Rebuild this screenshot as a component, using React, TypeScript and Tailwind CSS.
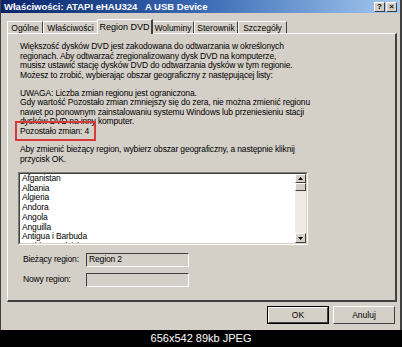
import React from "react";

const font = { fontFamily: '"Liberation Sans", Arial, sans-serif' };

function Tab({ label, selected, w }: { label: string; selected?: boolean; w: string }) {
  if (selected) {
    return (
      <div
        className={`relative z-10 -mx-[1px] h-[15px] ${w} border-l border-t border-white border-r-2 border-r-[#404040] bg-[#d4d0c8] flex items-center justify-center text-[9px] leading-none text-black`}
      >
        {label}
      </div>
    );
  }
  return (
    <div
      className={`mt-[2px] h-[13px] ${w} border-l border-t border-white border-r border-r-[#404040] bg-[#d4d0c8] flex items-center justify-center text-[8.5px] leading-none text-black`}
    >
      {label}
    </div>
  );
}

export default function App() {
  const items = [
    "Afganistan",
    "Albania",
    "Algieria",
    "Andora",
    "Angola",
    "Anguilla",
    "Antigua i Barbuda",
    "Arabia Saudyjska",
  ];
  return (
    <div className="w-[402px] h-[347px] bg-black overflow-hidden flex flex-col" style={font}>
      {/* window */}
      <div className="w-[402px] h-[330px] bg-[#d4d0c8] border-l border-l-[#404040] border-r-2 border-r-[#404040] flex flex-col">
        {/* title bar */}
        <div className="h-[13px] bg-gradient-to-r from-[#0a246a] via-[#3a6ab4] to-[#a6caf0] flex items-center pl-[3px] pr-[3px]">
          <span className="text-white font-bold text-[9.5px] leading-none whitespace-pre">
            {"Właściwości: ATAPI eHAU324   A USB Device"}
          </span>
          <div className="ml-auto flex gap-[1px]">
            <div className="w-[11px] h-[10px] bg-[#d4d0c8] border border-t-white border-l-white border-r-[#404040] border-b-[#404040] flex items-center justify-center text-[8px] font-bold leading-none text-black">
              ?
            </div>
            <div className="w-[11px] h-[10px] bg-[#d4d0c8] border border-t-white border-l-white border-r-[#404040] border-b-[#404040] flex items-center justify-center text-[8px] font-bold leading-none text-black">
              ×
            </div>
          </div>
        </div>

        {/* tabs */}
        <div className="pl-[6px] mt-[6px] flex items-start h-[14px]">
          <Tab label="Ogólne" w="w-[36px]" />
          <Tab label="Właściwości" w="w-[55px]" />
          <Tab label="Region DVD" w="w-[56px]" selected />
          <Tab label="Woluminy" w="w-[42px]" />
          <Tab label="Sterownik" w="w-[44px]" />
          <Tab label="Szczegóły" w="w-[49px]" />
        </div>

        {/* panel */}
        <div className="ml-[6px] w-[390px] h-[269px] border-l border-t border-white border-r-2 border-b-2 border-r-[#404040] border-b-[#404040] pl-[12px] pt-[8px] text-[8.5px] leading-[9.5px] tracking-[-0.15px] text-black">
          <p>
            Większość dysków DVD jest zakodowana do odtwarzania w określonych
            <br />
            regionach. Aby odtwarzać zregionalizowany dysk DVD na komputerze,
            <br />
            musisz ustawić stację dysków DVD do odtwarzania dysków w tym regionie.
            <br />
            Możesz to zrobić, wybierając obszar geograficzny z następującej listy:
          </p>
          <div className="relative mt-[8.5px]">
            <p>
              UWAGA: Liczba zmian regionu jest ograniczona.
              <br />
              Gdy wartość Pozostało zmian zmniejszy się do zera, nie można zmienić regionu
              <br />
              nawet po ponownym zainstalowaniu systemu Windows lub przeniesieniu stacji
              <br />
              dysków DVD na inny komputer.
              <br />
              Pozostało zmian: 4
            </p>
            <div className="absolute left-[-5px] top-[32px] w-[81px] h-[20px] border-2 border-[#d83a3a]" />
          </div>
          <p className="mt-[9px]">
            Aby zmienić bieżący region, wybierz obszar geograficzny, a następnie kliknij
            <br />
            przycisk OK.
          </p>

          {/* list */}
          <div className="mt-[8px] ml-[-2px] w-[290px] h-[73px] border-t border-l border-[#808080] border-r border-b border-r-white border-b-white">
            <div className="w-full h-full border-t border-l border-[#404040] border-r border-b border-r-[#d4d0c8] border-b-[#d4d0c8] bg-white flex overflow-hidden">
              <div className="flex-1 pl-[2px] pt-[0px] text-[8.5px] leading-[9.7px] overflow-hidden">
                {items.map((it) => (
                  <div key={it} className="whitespace-nowrap">{it}</div>
                ))}
              </div>
              {/* scrollbar */}
              <div className="w-[11px] h-full bg-[#eeebe6] flex flex-col">
                <div className="h-[9px] bg-[#d4d0c8] border border-t-white border-l-white border-r-[#404040] border-b-[#404040] flex items-center justify-center">
                  <svg width="5" height="3" viewBox="0 0 5 3"><path d="M2.5 0 L5 3 L0 3 Z" fill="#000" /></svg>
                </div>
                <div className="h-[8px] bg-[#d4d0c8] border border-t-white border-l-white border-r-[#404040] border-b-[#404040]" />
                <div className="flex-1" />
                <div className="h-[10px] bg-[#d4d0c8] border border-t-white border-l-white border-r-[#404040] border-b-[#404040] flex items-center justify-center">
                  <svg width="5" height="3" viewBox="0 0 5 3"><path d="M0 0 L5 0 L2.5 3 Z" fill="#000" /></svg>
                </div>
              </div>
            </div>
          </div>

          {/* fields */}
          <div className="mt-[8px] flex items-center h-[14px]">
            <span className="w-[66px] pl-[3px]">Bieżący region:</span>
            <div className="w-[103px] h-[14px] border-t border-l border-[#404040] border-r border-b border-r-white border-b-white bg-[#d4d0c8] pl-[2px] flex items-center">
              Region 2
            </div>
          </div>
          <div className="mt-[6px] flex items-center h-[14px]">
            <span className="w-[66px] pl-[3px]">Nowy region:</span>
            <div className="w-[103px] h-[14px] border-t border-l border-[#404040] border-r border-b border-r-white border-b-white bg-[#d4d0c8]" />
          </div>
        </div>

        {/* buttons */}
        <div className="mt-[4px] flex justify-end gap-[4px] pr-[5px]">
          <div className="w-[62px] h-[18px] border border-black">
            <div className="w-full h-full border border-t-white border-l-white border-r-[#404040] border-b-[#404040] flex items-center justify-center text-[8.5px] leading-none">
              OK
            </div>
          </div>
          <div className="w-[62px] h-[18px] border border-t-white border-l-white border-r-[#404040] border-b-[#404040] flex items-center justify-center text-[8.5px] leading-none">
            Anuluj
          </div>
        </div>
      </div>

      {/* caption */}
      <div className="flex-1 flex items-center justify-center text-white text-[11px] leading-none">
        656x542 89kb JPEG
      </div>
    </div>
  );
}
